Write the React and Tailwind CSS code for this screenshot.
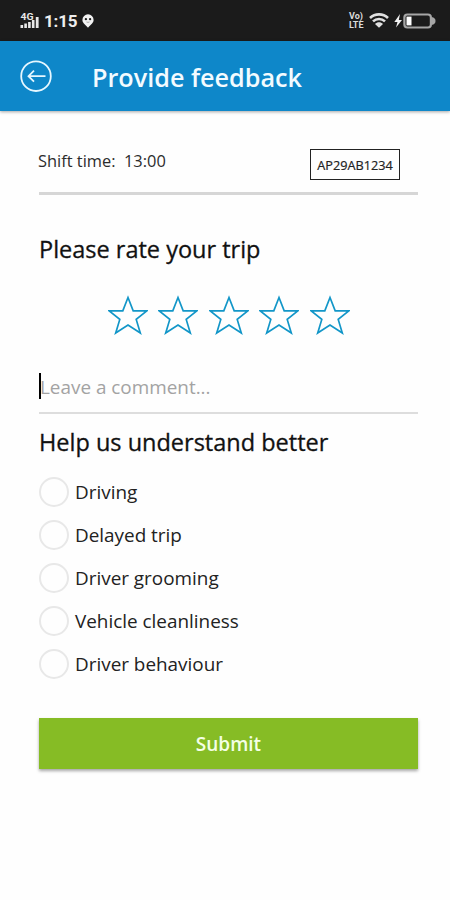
import React, { useState } from 'react';
import clsx from 'clsx';

const reasons = [
  'Driving',
  'Delayed trip',
  'Driver grooming',
  'Vehicle cleanliness',
  'Driver behaviour',
];

function SignalIcon() {
  return (
    <svg width="20" height="17" viewBox="0 0 20 17" fill="#e8e8e8" className="shrink-0">
      <text x="0.5" y="8" fontSize="9.5" fontWeight="700" fontFamily="Roboto, sans-serif" textLength="13" lengthAdjust="spacingAndGlyphs">4G</text>
      <rect x="0.5" y="13" width="2.6" height="3" />
      <rect x="4.3" y="11.5" width="2.6" height="4.5" />
      <rect x="8.1" y="10" width="2.6" height="6" />
      <rect x="11.9" y="8" width="2.6" height="8" />
      <rect x="15.8" y="5" width="2.8" height="11" />
    </svg>
  );
}

function PinIcon() {
  return (
    <svg width="12" height="14" viewBox="0 0 12 14" className="shrink-0">
      <path d="M6 0.3a5.6 5.6 0 0 1 5.6 5.6c0 2.8-2.6 4.3-5.6 7.8C3 10.2 0.4 8.7 0.4 5.9A5.6 5.6 0 0 1 6 0.3z" fill="#f2f2f2" />
      <circle cx="3.9" cy="5.2" r="1.15" fill="#1b1b1b" />
      <circle cx="8.1" cy="5.2" r="1.15" fill="#1b1b1b" />
      <path d="M4.5 8q1.500 0.700 3 0" stroke="#777" strokeWidth="0.6" fill="none" />
    </svg>
  );
}

function VolteIcon() {
  return (
    <div className="flex w-[17px] flex-col font-['Roboto'] text-[9px] leading-[9px] font-bold text-[#dcdcdc]">
      <span className="whitespace-nowrap">Vo)</span>
      <span className="whitespace-nowrap">LTE</span>
    </div>
  );
}

function WifiIcon() {
  return (
    <svg width="20" height="15" viewBox="0 0 20 15" fill="none" stroke="#e0e0e0" className="shrink-0">
      <path d="M1 5C6 0.2 14 0.2 19 5" strokeWidth="2.6" />
      <path d="M4 8.4c3.4-3.2 8.6-3.2 12 0" strokeWidth="2.6" />
      <path d="M10 14.8L6 11c2.2-2.2 5.800-2.2 8 0z" fill="#e0e0e0" stroke="none" />
    </svg>
  );
}

function BatteryIcon() {
  return (
    <svg width="42" height="16" viewBox="0 0 42 16" className="shrink-0">
      <path d="M6 1L0.3 9h3.200L2 14.500 8 7h-3.200z" fill="#f2f2f2" />
      <rect x="10.4" y="1.5" width="26.5" height="13" rx="3" fill="none" stroke="#a6a6a6" strokeWidth="2.2" />
      <rect x="12.500" y="3.6" width="5" height="8.8" fill="#fff" />
      <path d="M37.500 4c3 0.500 4 2 4 4s-1 3.500-4 4z" fill="#a6a6a6" />
    </svg>
  );
}

function StatusBar() {
  return (
    <div className="flex h-[41px] items-center justify-between bg-[#1b1b1b] pr-[14px] pl-5">
      <div className="flex items-center">
        <SignalIcon />
        <span className="ml-[4px] pt-px font-['Roboto'] text-[17px] leading-5 font-bold tracking-[-0.2px] text-[#eeeeee]">1:15</span>
        <span className="ml-[5px]"><PinIcon /></span>
      </div>
      <div className="flex items-center">
        <VolteIcon />
        <span className="ml-[3px]"><WifiIcon /></span>
        <span className="ml-[5px]"><BatteryIcon /></span>
      </div>
    </div>
  );
}

function Header() {
  return (
    <header className="flex h-[70px] items-center bg-[#0e87c9] pl-5 shadow-[0_1px_3px_rgba(0,0,0,0.35)]">
      <button aria-label="Back">
        <svg width="32" height="32" viewBox="0 0 32 32" fill="none" stroke="#e6f7ff" strokeWidth="1.8">
          <circle cx="16" cy="16.2" r="14.8" />
          <path d="M25.5 16.2H8.500M14 10.700L8.500 16.200l5.500 5.500" />
        </svg>
      </button>
      <h1 className="ml-[40px] pt-px text-[25.2px] leading-8 font-semibold text-[#f3fbff]">Provide feedback</h1>
    </header>
  );
}

function Rating() {
  const [rating, setRating] = useState(0);
  return (
    <div className="mt-[30px] flex justify-center gap-[10.5px]">
      {[1, 2, 3, 4, 5].map(n => (
        <button key={n} aria-label={`${n} stars`} onClick={() => setRating(n)}>
          <svg
            width="40"
            height="40"
            viewBox="0 0 40 40"
            stroke="#1296c8"
            strokeWidth="1.7"
            className={clsx(n <= rating ? 'fill-[#1296c8]' : 'fill-none')}
          >
            <path d="M20 2.5L25.2 15.8H38.8L28.2 24.4 32.3 38 20 30 7.7 38 11.8 24.4 1.2 15.8H14.8Z" />
          </svg>
        </button>
      ))}
    </div>
  );
}

export default function App() {
  const [selected, setSelected] = useState(null);

  return (
    <div className="min-h-[900px] w-full bg-[#fefefe] font-['Open_Sans',sans-serif] text-[#111111]">
      <StatusBar />
      <Header />

      <main className="pr-8 pl-[39px]">
        {/* Shift info */}
        <div className="flex h-[84px] items-start justify-between border-b-3 border-[#d6d6d6] pt-[38px] pr-[18px]">
          <p className="-ml-px text-[16.4px] leading-6 whitespace-pre text-[#2c2c2c]">Shift time:  13:00</p>
          <span className="flex h-[31px] w-[90px] items-center justify-center border-[1.5px] border-[#222222] pt-[2px] text-[12.7px] font-medium text-[#222222] [-webkit-text-stroke:0.2px_currentColor]">AP29AB1234</span>
        </div>

        <h2 className="mt-[38px] text-[23.5px] leading-8 font-medium [-webkit-text-stroke:0.3px_currentColor]">Please rate your trip</h2>
        <Rating />

        {/* Comment */}
        <div className="mt-[38px] flex h-[41px] items-start border-b-2 border-[#dddddd]">
          <span className="h-[26px] w-[2px] shrink-0 bg-black" />
          <span className="-ml-px text-[18.9px] leading-7 text-[#a3a3a3]">Leave a comment...</span>
        </div>

        {/* Reasons */}
        <h2 className="mt-[12px] text-[23.5px] leading-8 font-medium [-webkit-text-stroke:0.3px_currentColor]">Help us understand better</h2>
        <div className="mt-[19px] flex flex-col gap-[13px]">
          {reasons.map(reason => (
            <button key={reason} className="flex h-[30px] items-center" onClick={() => setSelected(reason)}>
              <span className={clsx(
                'h-[30px] w-[30px] rounded-full border-2 border-[#e8e8e8]',
                selected === reason && 'bg-[#86bc25]'
              )} />
              <span className="ml-[6px] text-[18.9px] leading-[26px] text-[#222222]">{reason}</span>
            </button>
          ))}
        </div>

        <button className="mt-[39px] flex h-[51px] w-full items-center justify-center bg-[#86bc25] pt-px text-[19px] font-semibold text-[#f4ffe6] shadow-[0_2px_3px_rgba(0,0,0,0.35)]">
          Submit
        </button>
      </main>
    </div>
  );
}
